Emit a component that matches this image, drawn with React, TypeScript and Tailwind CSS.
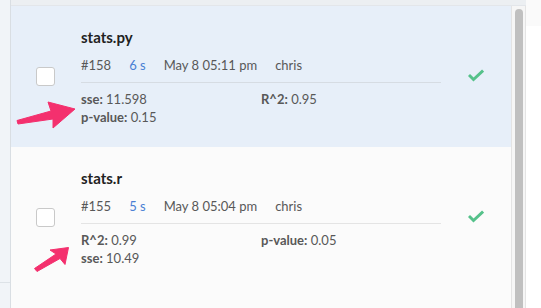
import React from "react";

type Stat = { label: string; value: string };

interface RunRowProps {
  file: string;
  run: string;
  duration: string;
  date: string;
  user: string;
  stats: Stat[];
  selected?: boolean;
}

const RunRow: React.FC<RunRowProps> = ({ file, run, duration, date, user, stats, selected }) => {
  return (
    <div
      className={`flex items-center h-[141px] shrink-0 border-b ${
        selected ? "bg-[#e7eff9] border-[#e7eff9]" : "bg-[#fbfbfb] border-[#fbfbfb]"
      }`}
    >
      <div className="pl-[25px] pr-[26px]">
        <div className="w-[19px] h-[19px] bg-white border border-[#c9c9c9] rounded-[3px]" />
      </div>
      <div className="w-[360px] flex flex-col pt-[1px]">
        <div className="text-[15px] leading-[20px] font-bold text-[#222]">{file}</div>
        <div
          className={`flex gap-[18px] mt-[8px] pb-[7px] border-b text-[13px] leading-[20px] text-[#585858] ${
            selected ? "border-[#d6dce3]" : "border-[#e4e4e4]"
          }`}
        >
          <span>{run}</span>
          <span className="text-[#4a7fd4]">{duration}</span>
          <span>{date}</span>
          <span>{user}</span>
        </div>
        <div className="grid grid-cols-2 mt-[7px] text-[13px] leading-[18px] text-[#585858]">
          {stats.map((s, i) => (
            <div key={i}>
              <span className="font-bold">{s.label}:</span> {s.value}
            </div>
          ))}
        </div>
      </div>
      <div className="flex-1 flex justify-center">
        <svg width="16" height="14" viewBox="0 0 16 14">
          <polyline
            points="2,7 5.5,10.5 14,2.5"
            fill="none"
            stroke="#55c18a"
            strokeWidth="3"
            strokeLinecap="square"
          />
        </svg>
      </div>
    </div>
  );
};

export default function App() {
  return (
    <div className="relative flex w-[541px] h-[308px] overflow-hidden bg-white font-['Lato','Open_Sans',sans-serif]">
      <div className="w-[11px] shrink-0 bg-[#f1f4f8] border-r border-[#d9dee3]">
        <div className="h-[283px] border-b border-[#dde2e7]" />
      </div>

      <div className="w-[515px] shrink-0 flex flex-col">
        <div className="h-[6px] shrink-0 bg-[#eceff2] border-b border-[#e3e6ea]" />
        <div className="flex flex-1 min-h-0">
          <div className="w-[500px] flex flex-col bg-[#fbfbfb]">
            <RunRow
              selected
              file="stats.py"
              run="#158"
              duration="6 s"
              date="May 8 05:11 pm"
              user="chris"
              stats={[
                { label: "sse", value: "11.598" },
                { label: "R^2", value: "0.95" },
                { label: "p-value", value: "0.15" },
              ]}
            />
            <RunRow
              file="stats.r"
              run="#155"
              duration="5 s"
              date="May 8 05:04 pm"
              user="chris"
              stats={[
                { label: "R^2", value: "0.99" },
                { label: "p-value", value: "0.05" },
                { label: "sse", value: "10.49" },
              ]}
            />
          </div>
          <div className="w-[15px] flex justify-center pt-[3px] bg-[#f6f6f6] border-l border-r border-[#e4e4e4]">
            <div className="w-[8px] h-full bg-[#c0c0c0] rounded-t-full" />
          </div>
        </div>
      </div>

      <div className="flex-1 flex flex-col">
        <div className="h-[26px] bg-[#fafafa]" />
      </div>

      <svg className="absolute inset-0 pointer-events-none" width="541" height="308" viewBox="0 0 541 308">
        <polygon
          points="17,120.5 51,111 48,102 75,109 53,128 53,119 18,124"
          fill="#f4306e"
          stroke="#f4306e"
          strokeWidth="1"
          strokeLinejoin="round"
        />
        <polygon
          points="34.5,268.5 56,254 50,250 68.5,247.5 65,264.5 60,258.5 37,271.5"
          fill="#f4306e"
          stroke="#f4306e"
          strokeWidth="1"
          strokeLinejoin="round"
        />
      </svg>
    </div>
  );
}
